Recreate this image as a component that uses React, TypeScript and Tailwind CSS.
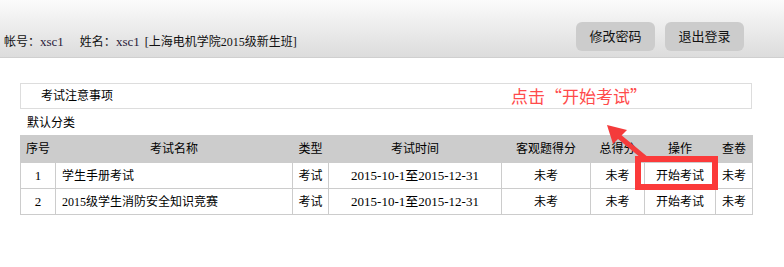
import React from "react"

const rows = [
  { no: "1", name: "学生手册考试", type: "考试", time: "2015-10-1至2015-12-31" },
  { no: "2", name: "2015级学生消防安全知识竞赛", type: "考试", time: "2015-10-1至2015-12-31" },
]

const font = { fontFamily: '"Liberation Serif", "Noto Sans CJK SC", serif' }

function Header() {
  return (
    <div className="h-[58px] flex justify-between border-b border-[#cfcfcf] bg-gradient-to-b from-[#fbfbfb] to-[#dcdcdc]">
      <div className="pl-[4px] pt-[34px] text-[12px] leading-[16px] text-[#111]">
        <span>帐号：</span>
        <span className="text-[#2a1a3a] text-[13px]">xsc1</span>
        <span className="ml-[16px]">姓名：</span>
        <span className="text-[#2a1a3a] text-[13px]">xsc1</span>
        <span className="ml-[5px]">[上海电机学院2015级新生班]</span>
      </div>
      <div className="flex gap-[10px] pt-[22px] pr-[40px]">
        <button className="w-[79px] h-[29px] rounded-[6px] bg-[#cccccc] text-[13px] text-[#111]">修改密码</button>
        <button className="w-[79px] h-[29px] rounded-[6px] bg-[#cccccc] text-[13px] text-[#111]">退出登录</button>
      </div>
    </div>
  )
}

export default function App() {
  return (
    <div className="relative w-full min-h-[267px] bg-white text-black" style={font}>
      <Header />

      <div className="ml-[20px] mt-[25px] w-[732px] h-[26px] border border-[#dddddd] flex items-center pl-[20px] text-[12px]">
        考试注意事项
      </div>

      <div className="h-[26px] pl-[27px] flex items-center text-[12px] pt-[2px]">默认分类</div>

      <table className="ml-[20px] w-[732px] table-fixed border-collapse text-[12px]">
        <colgroup>
          <col className="w-[35px]" />
          <col className="w-[237px]" />
          <col className="w-[36px]" />
          <col className="w-[173px]" />
          <col className="w-[89px]" />
          <col className="w-[54px]" />
          <col className="w-[71px]" />
          <col className="w-[37px]" />
        </colgroup>
        <thead>
          <tr className="bg-[#cccccc] h-[27px]">
            <th className="font-normal text-left pl-[5px] border border-[#cccccc]">序号</th>
            <th className="font-normal border border-[#cccccc]">考试名称</th>
            <th className="font-normal border border-[#cccccc]">类型</th>
            <th className="font-normal border border-[#cccccc]">考试时间</th>
            <th className="font-normal border border-[#cccccc]">客观题得分</th>
            <th className="font-normal border border-[#cccccc]">总得分</th>
            <th className="font-normal border border-[#cccccc]">操作</th>
            <th className="font-normal border border-[#cccccc]">查卷</th>
          </tr>
        </thead>
        <tbody>
          {rows.map((r) => (
            <tr key={r.no} className="h-[26px]">
              <td className="border border-[#cccccc] text-center text-[13px]">{r.no}</td>
              <td className="border border-[#cccccc] pl-[6px]">{r.name}</td>
              <td className="border border-[#cccccc] text-center">{r.type}</td>
              <td className="border border-[#cccccc] text-center text-[13px]">{r.time}</td>
              <td className="border border-[#cccccc] text-center">未考</td>
              <td className="border border-[#cccccc] text-center">未考</td>
              <td className="border border-[#cccccc] text-center">开始考试</td>
              <td className="border border-[#cccccc] text-center">未考</td>
            </tr>
          ))}
        </tbody>
      </table>

      {/* annotation overlay */}
      <div className="absolute left-[511px] top-[84px] text-[17px] leading-[24px] text-[#ff4b4b]" style={{ fontFamily: '"Noto Sans CJK SC", sans-serif' }}>
        点击“开始考试”
      </div>
      <svg className="absolute left-[600px] top-[118px]" width="50" height="45" viewBox="0 0 50 45">
        <line x1="45" y1="40" x2="16" y2="16" stroke="#f43b3b" strokeWidth="5" />
        <polygon points="7,7 27,12 13,26" fill="#f43b3b" />
      </svg>
      <div className="absolute left-[635px] top-[156px] w-[83px] h-[34px] border-[6px] border-[#fb3a3a]" />
    </div>
  )
}
